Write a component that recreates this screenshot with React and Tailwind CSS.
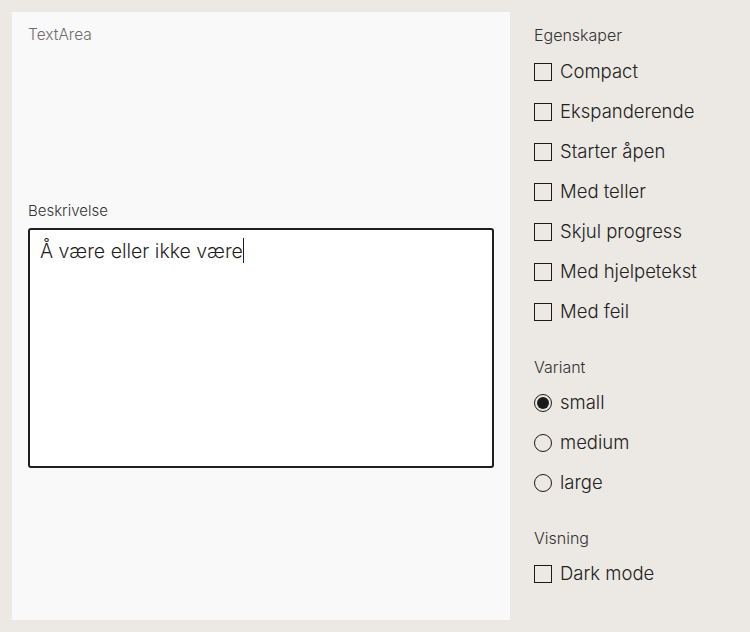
import React, { useState } from 'react'

const egenskaper = ['Compact', 'Ekspanderende', 'Starter åpen', 'Med teller', 'Skjul progress', 'Med hjelpetekst', 'Med feil']
const varianter = ['small', 'medium', 'large']

function Checkbox({ label, checked, onChange }) {
  return (
    <label className="flex h-10 items-center gap-2 cursor-pointer">
      <span className="flex h-[18px] w-[18px] items-center justify-center border border-[#1b1b1b]">
        {checked && <span className="h-[10px] w-[10px] bg-[#1b1b1b]" />}
      </span>
      <input type="checkbox" className="hidden" checked={checked} onChange={onChange} />
      <span className="text-[18.5px] font-light text-[#222]">{label}</span>
    </label>
  )
}

function Radio({ label, checked, onChange }) {
  return (
    <label className="flex h-10 items-center gap-2 cursor-pointer">
      <span className="flex h-[18px] w-[18px] items-center justify-center rounded-full border border-[#1b1b1b]">
        {checked && <span className="h-[12px] w-[12px] rounded-full bg-[#1b1b1b]" />}
      </span>
      <input type="radio" className="hidden" checked={checked} onChange={onChange} />
      <span className="text-[18.5px] font-light text-[#222]">{label}</span>
    </label>
  )
}

export default function App() {
  const [flags, setFlags] = useState({})
  const [variant, setVariant] = useState('small')
  const [dark, setDark] = useState(false)

  return (
    <div className="flex min-h-[632px] gap-6 bg-[#ece8e3] p-3 font-['Inter',sans-serif]">
      <div className="flex h-[608px] w-[498px] flex-col bg-[#f9f9f9] px-4 pt-[11px]">
        <div className="text-[15.5px] font-light leading-6 text-[#6e6e6e]">TextArea</div>

        <div className="mt-[152px] text-[15px] font-light leading-6 text-[#333]">Beskrivelse</div>
        <div className="mt-[5px] h-[240px] rounded-[3px] border-2 border-[#1e1e1e] bg-white px-[10px] pt-[3px]">
          <div className="text-[19.5px] font-light leading-7 text-[#1e1e1e]">
            Å være eller ikke være
            <span className="inline-block h-[25px] w-px translate-y-[5px] bg-[#1e1e1e]" />
          </div>
        </div>
      </div>

      <div className="flex flex-col gap-[23px] pt-[11px]">
        <div>
          <div className="h-6 text-[16px] font-light leading-6 text-[#333]">Egenskaper</div>
          <div className="mt-[5px]">
            {egenskaper.map(e => (
              <Checkbox key={e} label={e} checked={!!flags[e]} onChange={() => setFlags({ ...flags, [e]: !flags[e] })} />
            ))}
          </div>
        </div>

        <div>
          <div className="h-6 text-[16px] font-light leading-6 text-[#333]">Variant</div>
          <div className="mt-1">
            {varianter.map(v => (
              <Radio key={v} label={v} checked={variant === v} onChange={() => setVariant(v)} />
            ))}
          </div>
        </div>

        <div>
          <div className="h-6 text-[16px] font-light leading-6 text-[#333]">Visning</div>
          <div className="mt-1">
            <Checkbox label="Dark mode" checked={dark} onChange={() => setDark(!dark)} />
          </div>
        </div>
      </div>
    </div>
  )
}
